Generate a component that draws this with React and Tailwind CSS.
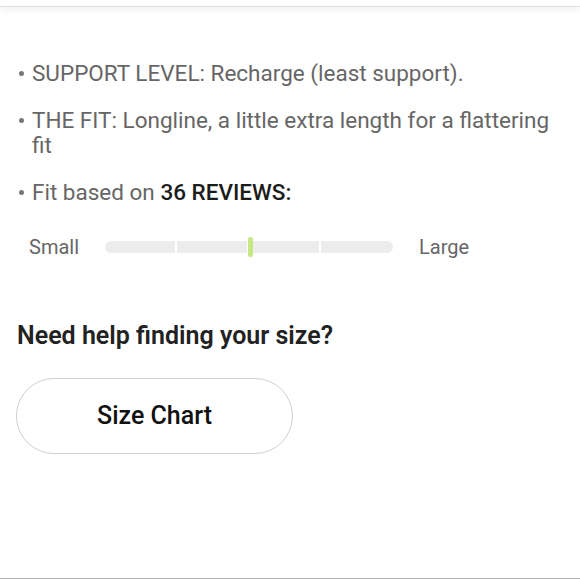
function Bullet({ children }) {
  return (
    <li className="flex items-start">
      <span className="w-[16px] h-[25px] flex items-center shrink-0">
        <span className="ml-[3px] w-[5px] h-[5px] rounded-full bg-[#777]" />
      </span>
      <span className="leading-[25px]">{children}</span>
    </li>
  );
}

function FitSlider() {
  return (
    <div className="flex items-center ml-[29px] mt-[29px] h-[26px]">
      <span className="w-[76px] text-[20px] text-[#666]">Small</span>
      <div className="relative w-[288px] h-[12px]">
        <div className="grid grid-cols-4 h-full rounded-full overflow-hidden bg-[#ececec]">
          <div className="border-r-2 border-white" />
          <div className="border-r-2 border-white" />
          <div className="border-r-2 border-white" />
          <div />
        </div>
        {/* marker */}
        <div className="absolute left-[143px] top-[-4px] w-[5px] h-[20px] rounded-sm bg-[#c8e683]" />
      </div>
      <span className="ml-[26px] text-[20px] text-[#666]">Large</span>
    </div>
  );
}

export default function App() {
  return (
    <div
      className="w-full h-[579px] bg-white flex flex-col border-b border-[#b5b5b5]"
      style={{ fontFamily: "Roboto, 'Noto Sans', sans-serif" }}
    >
      {/* top bar edge */}
      <div className="h-[7px] border-b border-[#e0e0e0] shadow-[0_3px_6px_rgba(0,0,0,0.06)]" />

      <ul className="mt-[54px] pl-[16px] pr-[28px] flex flex-col gap-[22px] text-[22.5px] text-[#666]">
        <Bullet>SUPPORT LEVEL: Recharge (least support).</Bullet>
        <Bullet>THE FIT: Longline, a little extra length for a flattering fit</Bullet>
        <Bullet>
          Fit based on <span className="font-medium text-[#1c1c1c]">36 REVIEWS:</span>
        </Bullet>
      </ul>

      <FitSlider />

      <h2 className="mt-[62px] ml-[17px] text-[25px] font-semibold text-[#222] leading-[28px]">
        Need help finding your size?
      </h2>

      <button className="mt-[28px] ml-[16px] w-[277px] h-[76px] rounded-full border border-[#cfcfcf] bg-white text-[25px] font-medium text-[#111]">
        Size Chart
      </button>
    </div>
  );
}
